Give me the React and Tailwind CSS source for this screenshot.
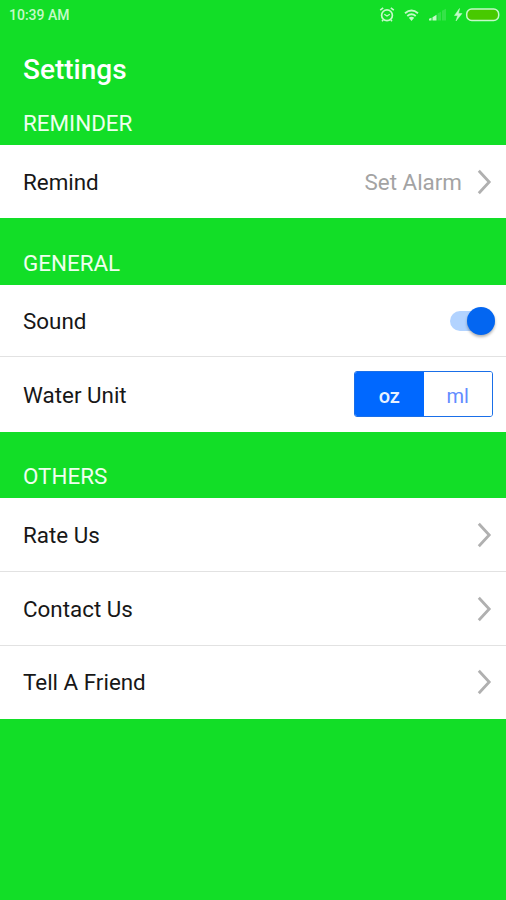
import React, { useState } from 'react'

export default function App() {
  const [sound, setSound] = useState(true)
  const [unit, setUnit] = useState('oz')

  return (
    <div className="h-[900px] w-[506px] overflow-hidden bg-[#12de27] font-['Roboto',sans-serif] text-[22.4px] leading-7 text-[#171717]">
      <StatusBar />
      <h1 className="flex h-[72px] items-center pl-[23px] pt-[8px] text-[28px] font-medium text-white">
        Settings
      </h1>

      <SectionTitle className="h-[43px]">REMINDER</SectionTitle>
      <Panel>
        <Row label="Remind" className="h-[73px]">
          <span className="mr-[15px] text-[#a3a3a3]">Set Alarm</span>
          <Chevron />
        </Row>
      </Panel>

      <SectionTitle className="h-[67px]">GENERAL</SectionTitle>
      <Panel>
        <Row label="Sound" className="h-[71px]">
          <Switch checked={sound} onChange={setSound} />
        </Row>
        <Row label="Water Unit" className="h-[75px]">
          <UnitPicker value={unit} onChange={setUnit} />
        </Row>
      </Panel>

      <SectionTitle className="h-[66px]">OTHERS</SectionTitle>
      <Panel>
        <Row label="Rate Us" className="h-[73px]"><Chevron /></Row>
        <Row label="Contact Us" className="h-[73px]"><Chevron /></Row>
        <Row label="Tell A Friend" className="h-[71px] pb-[2px]"><Chevron /></Row>
      </Panel>
    </div>
  )
}

function StatusBar() {
  return (
    <div className="flex h-[30px] items-center justify-between pl-[9px] text-[#c4fac9]">
      <span className="text-[14px] font-medium leading-none">10:39 AM</span>
      <svg width="130" height="30" viewBox="376 0 130 30" fill="none" stroke="currentColor">
        {/* alarm */}
        <circle cx="387" cy="15.3" r="5.4" strokeWidth="1.7" />
        <path d="M380.2 10.2l3-2.4M393.8 10.2l-3-2.4M383.2 20l-1.2 1.3M390.8 20l1.2 1.3" strokeWidth="1.6" />
        <path d="M384.3 14.2l2.7 1.8 2.8-1.8" strokeWidth="1.3" />
        {/* wifi */}
        <path d="M405 13.2q6.5-5.2 13 0M407.3 15.9q4.2-3.4 8.4 0" strokeWidth="1.9" />
        <path d="M408.8 17.8q2.7-1.9 5.4 0l-2.7 3.2z" fill="currentColor" stroke="none" />
        {/* signal */}
        <path d="M429 20.5v-1.7l2.5-1v2.7zM432.5 20.5v-3.2l4-2.6v5.8z" fill="currentColor" stroke="none" />
        <path d="M437.5 20.5v-7l3.5-1.8v8.8zM442 20.5v-9.8l4-2v11.8z" fill="#35e348" stroke="none" />
        {/* charging battery */}
        <path d="M459.5 8.5l-5 7h3.2l-1.7 5.5 6-7.5h-3.5z" fill="currentColor" stroke="currentColor" strokeWidth="0.5" />
        <rect x="466.7" y="9" width="32" height="11.5" rx="5" fill="#48c900" strokeWidth="1.5" />
      </svg>
    </div>
  )
}

function SectionTitle({ className, children }) {
  return (
    <h2 className={`flex items-end pb-[8px] pl-[23px] font-normal text-[#efffef] ${className}`}>
      {children}
    </h2>
  )
}

function Panel({ children }) {
  return <div className="divide-y divide-[#e2e2e2] bg-white">{children}</div>
}

function Row({ label, className, children }) {
  return (
    <div className={`box-content flex items-center justify-between pl-[23px] ${className}`}>
      <span>{label}</span>
      <div className="flex items-center">{children}</div>
    </div>
  )
}

function Chevron() {
  return (
    <svg className="mr-[14px]" width="15" height="26" viewBox="0 0 15 26" fill="none" stroke="#b0b0b0" strokeWidth="2.8">
      <path d="M1.8 1.8L12.2 13 1.8 24.2" />
    </svg>
  )
}

function Switch({ checked, onChange }) {
  return (
    <button
      type="button"
      role="switch"
      aria-checked={checked}
      aria-label="Sound"
      onClick={() => onChange(!checked)}
      className={`mr-[11px] flex h-5 w-[45px] items-center rounded-full bg-[#b2d3ff] ${checked ? 'justify-end' : 'justify-start'}`}
    >
      <span className="size-7 rounded-full bg-[#0366f1] shadow-[0_2px_3px_rgba(0,0,0,0.3)]" />
    </button>
  )
}

function UnitPicker({ value, onChange }) {
  return (
    <div className="mr-[13px] mb-px flex h-[46px] w-[139px] overflow-hidden rounded-[3px] border border-[#1a6fe8] text-[20px]">
      {['oz', 'ml'].map((unit) => (
        <button
          key={unit}
          type="button"
          onClick={() => onChange(unit)}
          className={`flex-1 pt-[3px] ${value === unit ? 'bg-[#0068ff] font-medium text-[#e8f2ff]' : 'bg-white text-[#628cff]'}`}
        >
          {unit}
        </button>
      ))}
    </div>
  )
}
